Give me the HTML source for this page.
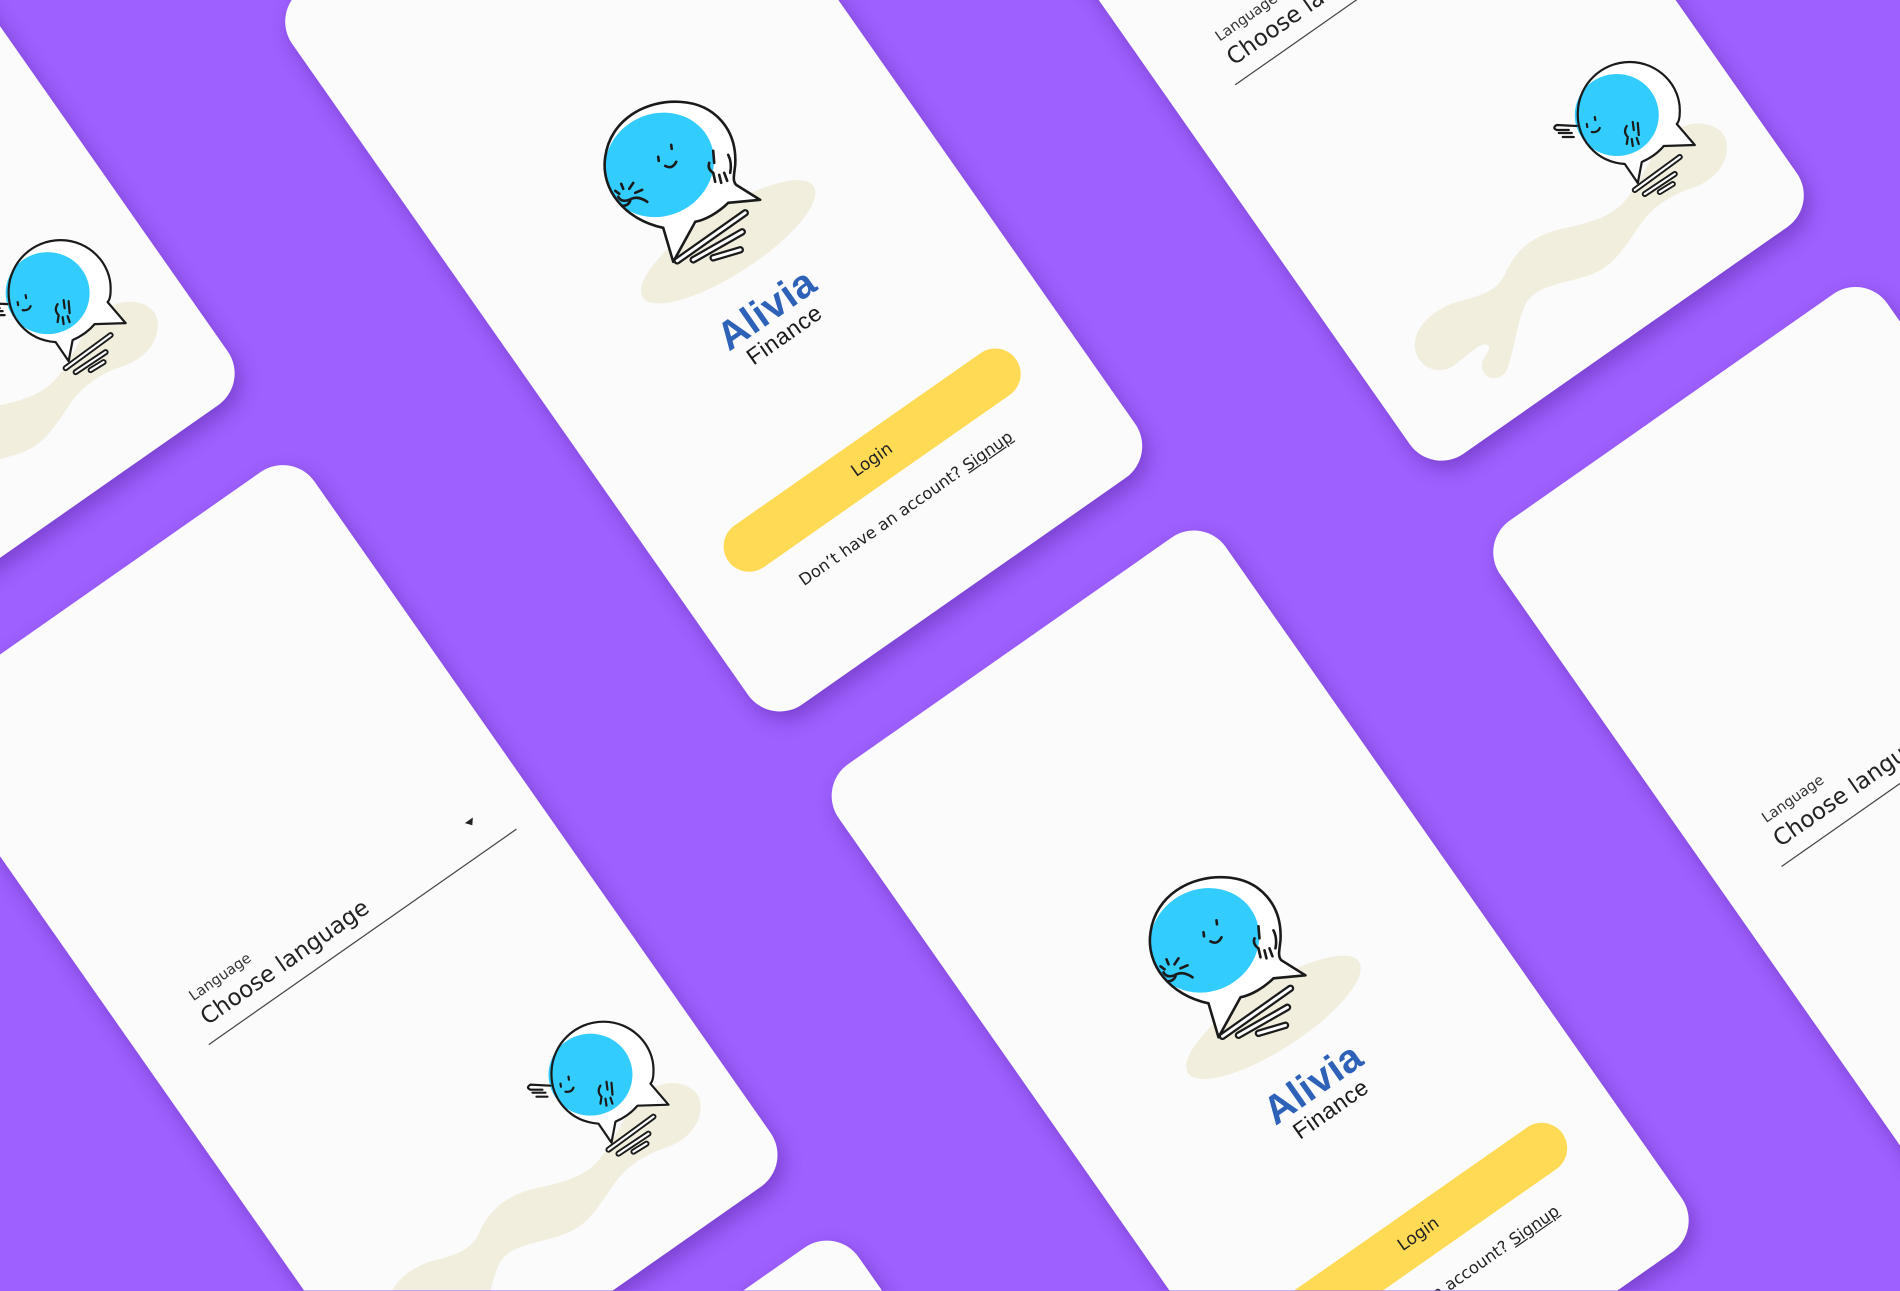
<!DOCTYPE html>
<html><head><meta charset="utf-8">
<style>
html,body{margin:0;padding:0;width:1900px;height:1291px;overflow:hidden}
#clip{position:absolute;left:0;top:0;width:1900px;height:1291px;overflow:hidden;background:#9E60FE}
#s{position:absolute;left:0;top:0;width:1568px;height:1065px;transform:scale(1.2117);transform-origin:0 0;overflow:hidden}
.card{position:absolute;width:390px;height:720px;background:#FBFBFB;border-radius:32px;transform:rotate(-35deg);box-shadow:0 8px 16px rgba(70,20,140,0.4);font-family:"DejaVu Sans","Liberation Sans",sans-serif}
.card *{position:absolute}
.alivia{left:0;width:390px;text-align:center;top:417px;font-family:"Liberation Sans",sans-serif;font-weight:bold;font-size:33px;color:#2D62B8;letter-spacing:0.5px}
.fin{left:0;width:390px;text-align:center;top:452px;font-family:"Liberation Sans",sans-serif;font-size:19px;color:#1a1a1a;letter-spacing:0.5px}
.btn{left:50px;top:567px;width:290px;height:42px;border-radius:21px;background:#FFDA55;text-align:center;line-height:42px;font-size:14px;color:#222}
.sig{left:0;width:390px;top:629px;text-align:center;font-size:13.5px;color:#222}
.sig u{position:static}
.lab{left:62px;top:315px;font-size:12px;color:#333}
.cho{left:60px;top:332px;font-size:19px;color:#222}
.line{left:52px;top:362px;width:310px;height:1px;background:#444}
.arr{left:330px;top:334px;width:0;height:0;border-left:4px solid transparent;border-right:4px solid transparent;border-top:5px solid #222}
svg.art{position:absolute;overflow:visible}
</style></head><body>
<div id="clip">
<div id="s">

<div class="card" style="left:-355px;top:-227px"></div>
<div class="card" style="left:93px;top:418px">
  <div class="lab">Language</div><div class="cho">Choose language</div><div class="line"></div><div class="arr"></div>
</div>
<div class="card" style="left:542px;top:1058px"></div>
<div class="card" style="left:394px;top:-167px">
  <div class="alivia">Alivia</div><div class="fin">Finance</div>
  <div class="btn">Login</div>
  <div class="sig">Don’t have an account? <u>Signup</u></div>
</div>
<div class="card" style="left:845px;top:472px">
  <div class="alivia">Alivia</div><div class="fin">Finance</div>
  <div class="btn">Login</div>
  <div class="sig">Don’t have an account? <u>Signup</u></div>
</div>
<div class="card" style="left:940px;top:-374px">
  <div class="lab">Language</div><div class="cho">Choose language</div><div class="line"></div><div class="arr"></div>
</div>
<div class="card" style="left:1391px;top:271px">
  <div class="lab">Language</div><div class="cho">Choose language</div><div class="line"></div><div class="arr"></div>
</div>

<svg width="0" height="0" style="position:absolute">
<defs>
<g id="lm">
  <ellipse cx="143" cy="157" rx="102" ry="32" transform="rotate(-33 143 157)" fill="#F1EEDE"/>
  <path d="M78,143 C40,135 15,105 20,72 C25,35 60,15 95,17 C130,19 152,45 150,80 C149,90 147,96 151,100 L175,115 L143,118 C133,128 120,135 110,137 L88,177 Z" fill="#fff"/>
  <ellipse cx="74" cy="80" rx="56" ry="51" transform="rotate(-30 74 80)" fill="#33CCFF"/>
  <path d="M78,143 C40,135 15,105 20,72 C25,35 60,15 95,17 C130,19 152,45 150,80 C149,90 147,96 151,100 L175,115 L143,118 C133,128 120,135 110,137 L88,177 Z" fill="none" stroke="#1a1a1a" stroke-width="2.6" stroke-linejoin="round"/>
  <g stroke="#1a1a1a" stroke-width="2.6" stroke-linecap="round" fill="none">
    <path d="M86,60 L86.5,64 M73,72 L73.5,76 M80,81 Q87,85 91,77"/>
    <path d="M62,117 Q52,110 44,115 Q36,118 33,112 M44,104 L48,98 M38,104 L36,99 M34,109 L30,106 M50,108 L57,105 M45,116 Q43,121 37,121"/>
    <path d="M128,66 L129,78 M124,78 Q122,84 128,88 L130,97 M134,90 L136,98 M139,88 L142,96 M143,70 Q147,78 145,88"/>
  </g>
  <g stroke-linecap="round">
    <path d="M92,176 L160,128 M108,175 L157,147 M128,173 L155,165" stroke="#1a1a1a" stroke-width="7.5"/>
    <path d="M92,176 L160,128 M108,175 L157,147 M128,173 L155,165" stroke="#fff" stroke-width="3"/>
  </g>
</g>
<g id="la">
  <path d="M278,86 C292,80 318,84 320,104 C322,125 305,142 285,148 C262,156 245,168 233,185 C215,212 205,228 180,236 C155,244 130,246 120,262 C110,280 108,310 100,330 C95,340 80,342 76,330 C72,318 85,312 82,306 C76,300 65,312 48,325 C30,338 8,325 8,305 C8,285 30,268 50,262 C72,256 92,252 100,230 C110,210 125,197 150,190 C175,184 205,180 222,156 C235,138 245,115 255,103 C262,94 270,89 278,86 Z" fill="#F1EEDE"/>
  <path d="M218,124 C190,122 170,100 171,72 C172,44 195,22 223,22 C251,22 274,45 273,72 C273,78 272,82 270,84 L288,105 L257,106 C252,112 244,118 235,122 L231,143 Z" fill="#fff"/>
  <ellipse cx="210" cy="75" rx="42" ry="41" fill="#33CCFF"/>
  <path d="M218,124 C190,122 170,100 171,72 C172,44 195,22 223,22 C251,22 274,45 273,72 C273,78 272,82 270,84 L288,105 L257,106 C252,112 244,118 235,122 L231,143 Z" fill="none" stroke="#1a1a1a" stroke-width="2.2" stroke-linejoin="round"/>
  <g stroke="#1a1a1a" stroke-width="2.2" stroke-linecap="round" fill="none">
    <path d="M188,77 L188.5,80 M180,84 L180.5,87 M185,92 Q191,93 193,88"/>
    <path d="M170,86 L150,85 Q145,88 150,90 L162,90 M152,93 L165,93 M156,97 L167,97"/>
    <path d="M220,86 Q216,92 221,97 L220,104 M225,99 L226,106 M230,98 L232,104 M231,83 L232,95 M226,82 L227,90"/>
  </g>
  <g stroke-linecap="round">
    <path d="M228,150 L273,117 M238,154 L268,134 M253,152 L266,144" stroke="#1a1a1a" stroke-width="6"/>
    <path d="M228,150 L273,117 M238,154 L268,134 M253,152 L266,144" stroke="#fff" stroke-width="2.2"/>
  </g>
</g>
</defs></svg>

<svg class="art" style="left:482.6px;top:69.7px" width="198" height="181.6" viewBox="0 0 240 220"><use href="#lm"/></svg>
<svg class="art" style="left:932.6px;top:709.7px" width="198" height="181.6" viewBox="0 0 240 220"><use href="#lm"/></svg>

<svg class="art" style="left:313.6px;top:825.3px" width="280.6" height="240.2" viewBox="0 0 340 291"><use href="#la"/></svg>
<svg class="art" style="left:1160.6px;top:33.3px" width="280.6" height="240.2" viewBox="0 0 340 291"><use href="#la"/></svg>
<svg class="art" style="left:-134.4px;top:180.3px" width="280.6" height="240.2" viewBox="0 0 340 291"><use href="#la"/></svg>

</div>
</div>
</body></html>
